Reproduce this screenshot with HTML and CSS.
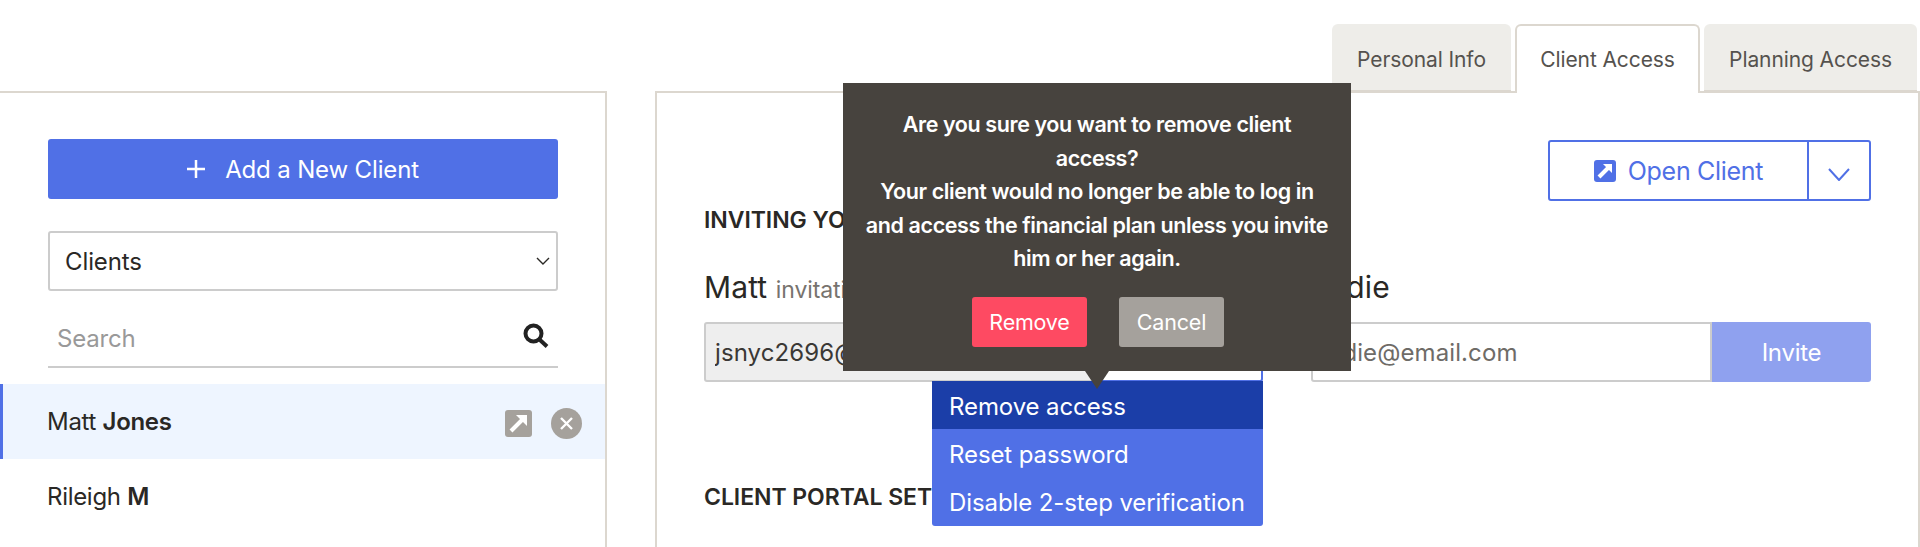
FILE: index.html
```html
<!DOCTYPE html>
<html lang="en">
<head>
<meta charset="utf-8">
<title>Client Access</title>
<link rel="stylesheet" href="styles.css">
</head>
<body>
<div class="page">
  <nav class="tabs">
    <a class="tab">Personal Info</a>
    <a class="tab tab-active">Client Access</a>
    <a class="tab">Planning Access</a>
  </nav>
  <div class="panels">
    <aside class="sidebar">
      <button class="add-btn">
        <svg class="plus" viewBox="0 0 18 18"><path d="M9 0v18M0 9h18"/></svg>
        <span>Add a New Client</span>
      </button>
      <div class="select">
        <span>Clients</span>
        <svg class="select-chev" viewBox="0 0 14 8"><path d="M1 1l6 6 6-6"/></svg>
      </div>
      <div class="search">
        <input class="search-input" placeholder="Search">
        <svg class="search-icon" viewBox="0 0 26 25"><circle cx="10.5" cy="10.5" r="8"/><path d="M16.5 16.5l7.5 7"/></svg>
      </div>
      <ul class="clients">
        <li class="client client-active">
          <span class="client-name">Matt <b>Jones</b></span>
          <svg class="client-open" viewBox="0 0 27 27"><rect width="27" height="27" rx="3"/><path class="arrow-line" d="M6 21L18 9"/><path class="arrow-head" d="M11 5h11v11z"/></svg>
          <svg class="client-x" viewBox="0 0 31 31"><circle cx="15.5" cy="15.5" r="15.5"/><path d="M10 10l11 11M21 10L10 21"/></svg>
        </li>
        <li class="client"><span class="client-name">Rileigh <b>M</b></span></li>
      </ul>
    </aside>
    <main class="content">
      <div class="open-row">
        <div class="open-group">
          <button class="open-btn">
            <svg class="open-icon" viewBox="0 0 22 22"><rect width="22" height="22" rx="3"/><path class="arrow-line" d="M5 17L14 8"/><path class="arrow-head" d="M9 4h9v9z"/></svg>
            <span>Open Client</span>
          </button>
          <button class="open-more"><svg class="open-chev" viewBox="0 0 22 13"><path d="M1 1l10 11L21 1"/></svg></button>
        </div>
      </div>
      <h2 class="section-title first">INVITING YOUR CLIENTS</h2>
      <div class="invites">
        <section class="invite">
          <h3 class="person">Matt <small>invitation sent</small></h3>
          <div class="field">
            <input class="email email-sent" value="jsnyc2696@email.com">
            <div class="options">
              <button class="options-btn">Options</button>
              <ul class="menu">
                <li class="menu-item menu-item-active">Remove access</li>
                <li class="menu-item">Reset password</li>
                <li class="menu-item">Disable 2-step verification</li>
              </ul>
            </div>
          </div>
        </section>
        <section class="invite">
          <h3 class="person">Jodie</h3>
          <div class="field">
            <input class="email" placeholder="jodie@email.com">
            <button class="invite-btn">Invite</button>
          </div>
        </section>
      </div>
      <h2 class="section-title second">CLIENT PORTAL SETTINGS</h2>
    </main>
  </div>
  <div class="popover">
    <p class="popover-text">Are you sure you want to remove client<br>access?<br>Your client would no longer be able to log in<br>and access the financial plan unless you invite<br>him or her again.</p>
    <div class="popover-actions">
      <button class="pop-btn pop-remove">Remove</button>
      <button class="pop-btn pop-cancel">Cancel</button>
    </div>
  </div>
</div>
</body>
</html>
```
FILE: styles.css
```css
* { box-sizing: border-box; }
html, body { margin: 0; height: 100%; background: #fff; overflow: hidden; }
body { font-family: "Inter", "Liberation Sans", sans-serif; color: #2a2825; }
button, input { font-family: inherit; }
.page { position: relative; height: 547px; overflow: hidden; }

.tabs { display: flex; justify-content: flex-end; gap: 4px; padding: 24px 3px 0 0; height: 92px; position: relative; z-index: 1; }
.tab { height: 68px; padding: 4px 0 0; display: flex; align-items: center; justify-content: center; background: #eeede9; border-radius: 6px 6px 0 0; font-size: 21px; color: #55524e; border-bottom: 2px solid #dcd7cf; letter-spacing: -0.1px; }
.tab:nth-child(1) { width: 179px; }
.tab:nth-child(3) { width: 213px; }
.tab-active { width: 185px; height: 69px; padding: 0; background: #fff; border: 2px solid #dcd7cf; border-bottom: 0; }

.panels { display: flex; gap: 48px; height: 456px; margin-top: -1px; }
.sidebar { width: 607px; flex: none; border-top: 2px solid #dcd7cf; border-right: 2px solid #dcd7cf; padding-top: 46px; }
.add-btn { display: flex; align-items: center; justify-content: center; gap: 20px; margin: 0 47px 0 48px; width: 510px; height: 60px; background: #5070e6; border: 0; border-radius: 3px; color: #fff; font-size: 24px; letter-spacing: -0.15px; }
.plus { width: 18px; height: 18px; fill: none; stroke: #fff; stroke-width: 2.5; }
.select { display: flex; align-items: center; justify-content: space-between; margin: 32px 47px 0 48px; height: 60px; padding: 0 6px 0 15px; border: 2px solid #ccc; border-radius: 3px; font-size: 24px; letter-spacing: -0.1px; }
.select-chev { width: 14px; height: 8px; fill: none; stroke: #2a2825; stroke-width: 1.4; }
.search { display: flex; align-items: center; margin: 12px 47px 0 48px; height: 65px; padding: 7px 9px 0 9px; border-bottom: 2px solid #ccc; }
.search-input { flex: 1; min-width: 0; border: 0; outline: 0; padding: 0; font-size: 24px; letter-spacing: -0.2px; background: transparent; }
.search-input::placeholder { color: #999; opacity: 1; }
.search-icon { width: 26px; height: 25px; margin-top: -6px; fill: none; stroke: #222; stroke-width: 4; }
.clients { list-style: none; margin: 16px 0 0; padding: 0; }
.client { display: flex; align-items: center; height: 75px; padding-left: 47px; font-size: 24px; letter-spacing: -0.3px; }
.client-active { background: #eef5ff; border-left: 3px solid #5070e6; padding: 0 23px 0 44px; }
.client b { font-weight: 600; }
.client-name { flex: 1; margin-top: -1px; }
.client-open { width: 27px; height: 27px; margin-right: 19px; margin-top: 3px; fill: #a5a19c; }
.client-x { width: 31px; height: 31px; margin-top: 3px; fill: #a5a19c; stroke: none; }
.client-x path { stroke: #fff; stroke-width: 2.4; fill: none; }
.arrow-line { stroke: #fff; stroke-width: 4; fill: none; }
.arrow-head { fill: #fff; }

.content { flex: 1; min-width: 0; border-top: 2px solid #dcd7cf; border-left: 2px solid #dcd7cf; border-right: 2px solid #dcd7cf; padding: 47px 47px 0 47px; }
.open-row { display: flex; justify-content: flex-end; }
.open-group { display: flex; height: 61px; width: 323px; border: 2px solid #5070e6; border-radius: 3px; }
.open-btn { width: 259px; display: flex; align-items: center; justify-content: center; gap: 12px; border: 0; border-right: 2px solid #5070e6; background: none; color: #5070e6; font-size: 25px; letter-spacing: -0.3px; padding: 0; }
.open-icon { width: 22px; height: 22px; fill: #5070e6; }
.open-more { flex: 1; background: none; border: 0; padding: 7px 0 0; display: flex; align-items: center; justify-content: center; }
.open-chev { width: 22px; height: 13px; fill: none; stroke: #5070e6; stroke-width: 2; }

.section-title { margin: 0; font-size: 23px; line-height: 24px; font-weight: 600; letter-spacing: -0.05px; color: #2a2825; }
.first { margin-top: 7px; }
.invites { display: grid; grid-template-columns: 559px 560px; gap: 48px; margin-top: 36px; }
.person { margin: 0; font-size: 30px; line-height: 38px; font-weight: 400; letter-spacing: 0.1px; color: #2a2825; }
.person small { font-size: 23px; line-height: 1; color: #77736e; letter-spacing: -0.1px; }
.field { display: flex; height: 60px; margin-top: 16px; }
.email { flex: 1; min-width: 0; height: 60px; border: 2px solid #ccc; border-radius: 3px 0 0 3px; padding: 0 9px; font-size: 24px; letter-spacing: 0.1px; color: #3a3835; outline: 0; }
.email::placeholder { color: #6e6b67; opacity: 1; }
.email-sent { background: #eee; }
.options { position: relative; width: 163px; }
.options-btn { width: 100%; height: 60px; background: #fff; border: 2px solid #5070e6; border-radius: 0 3px 3px 0; color: #5070e6; font-size: 24px; }
.menu { position: absolute; top: 59px; right: 0; width: 331px; margin: 0; padding: 0 0 1px; list-style: none; background: #5070e6; border-radius: 0 0 3px 3px; z-index: 2; overflow: hidden; }
.menu-item { height: 48px; display: flex; align-items: center; padding: 2px 0 0 17px; color: #fff; font-size: 24px; letter-spacing: -0.1px; }
.menu-item-active { background: #1b3ea8; }
.invite-btn { width: 159px; height: 60px; border: 0; border-radius: 0 3px 3px 0; background: #8fa1ef; color: #fff; font-size: 24px; letter-spacing: -0.25px; }
.second { margin-top: 103px; }

.popover { position: absolute; left: 843px; top: 83px; width: 508px; height: 288px; background: #47433e; z-index: 3; text-align: center; color: #fff; padding-top: 25px; }
.popover::after { content: ""; position: absolute; left: 50%; top: 100%; margin-left: -12px; border-left: 12px solid transparent; border-right: 12px solid transparent; border-top: 18px solid #47433e; }
.popover-text { margin: 0; font-size: 21.5px; line-height: 33.5px; font-weight: 600; letter-spacing: -0.4px; white-space: nowrap; }
.popover-actions { display: flex; justify-content: center; gap: 32px; margin-top: 21px; padding-left: 2px; }
.pop-btn { height: 50px; border: 0; border-radius: 3px; color: #fff; font-size: 21.5px; letter-spacing: -0.2px; padding: 0; }
.pop-remove { width: 115px; background: #fe4a62; }
.pop-cancel { width: 105px; background: #a5a19c; }
```
